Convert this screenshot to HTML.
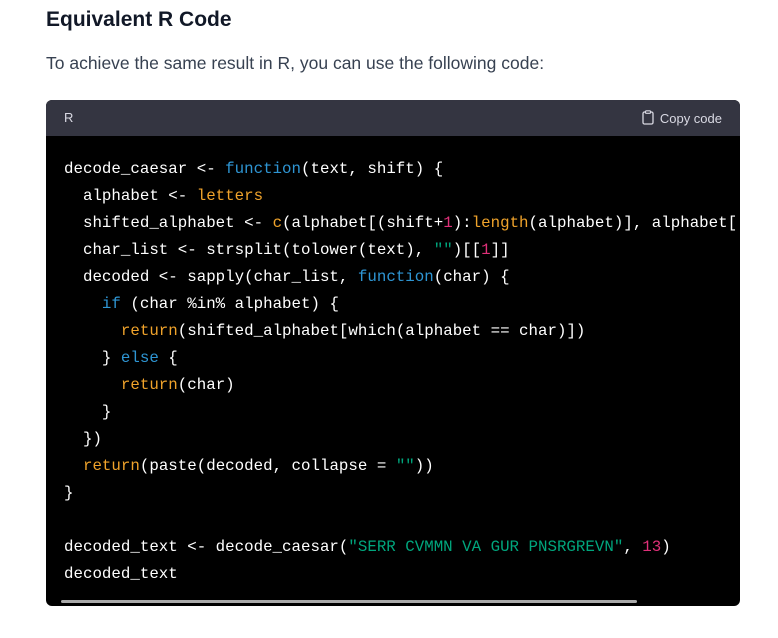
<!DOCTYPE html>
<html><head><meta charset="utf-8"><style>
body{margin:0;background:#fff;width:778px;height:638px;overflow:hidden;font-family:"Liberation Sans",sans-serif;}
h2{position:absolute;left:46px;top:8px;margin:0;font-size:21px;font-weight:bold;color:#111827;letter-spacing:0}
p{position:absolute;left:46px;top:53px;margin:0;font-size:17.5px;color:#374151;letter-spacing:0}
.box{position:absolute;left:46px;top:100px;width:694px;height:506px;background:#000;border-radius:6px;overflow:hidden}
.hd{height:36px;background:#343541;color:#d9d9e3;font-size:13px;position:relative}
.hd .l{position:absolute;left:18px;top:10px}
.hd .r{position:absolute;right:18px;top:10px}
pre{margin:0;position:absolute;left:18px;top:56px;font-family:"Liberation Mono",monospace;font-size:15.8px;line-height:27px;color:#fff;white-space:pre}
.b{color:#2e95d3}.o{color:#f0a32b}.g{color:#00a67d}.m{color:#df3079}
.sb{position:absolute;left:15px;top:500px;width:576px;height:3px;background:#aaa;border-radius:2px}
</style></head><body>
<h2>Equivalent R Code</h2>
<p>To achieve the same result in R, you can use the following code:</p>
<div class="box">
<div class="hd"><span class="l">R</span><span class="r"><svg width="12" height="15" viewBox="0 0 12 15" style="vertical-align:-2px;margin-right:6px"><rect x="1" y="2" width="10" height="12" rx="1.5" fill="none" stroke="#d9d9e3" stroke-width="1.3"/><rect x="3.5" y="0.8" width="5" height="2.5" rx="0.8" fill="#343541" stroke="#d9d9e3" stroke-width="1.2"/></svg>Copy code</span></div>
<pre>decode_caesar &lt;- <span class="b">function</span>(text, shift) {
  alphabet &lt;- <span class="o">letters</span>
  shifted_alphabet &lt;- <span class="o">c</span>(alphabet[(shift+<span class="m">1</span>):<span class="o">length</span>(alphabet)], alphabet[
  char_list &lt;- strsplit(tolower(text), <span class="g">""</span>)[[<span class="m">1</span>]]
  decoded &lt;- sapply(char_list, <span class="b">function</span>(char) {
    <span class="b">if</span> (char %in% alphabet) {
      <span class="o">return</span>(shifted_alphabet[which(alphabet == char)])
    } <span class="b">else</span> {
      <span class="o">return</span>(char)
    }
  })
  <span class="o">return</span>(paste(decoded, collapse = <span class="g">""</span>))
}

decoded_text &lt;- decode_caesar(<span class="g">"SERR CVMMN VA GUR PNSRGREVN"</span>, <span class="m">13</span>)
decoded_text</pre>
<div class="sb"></div>
</div>
</body></html>
